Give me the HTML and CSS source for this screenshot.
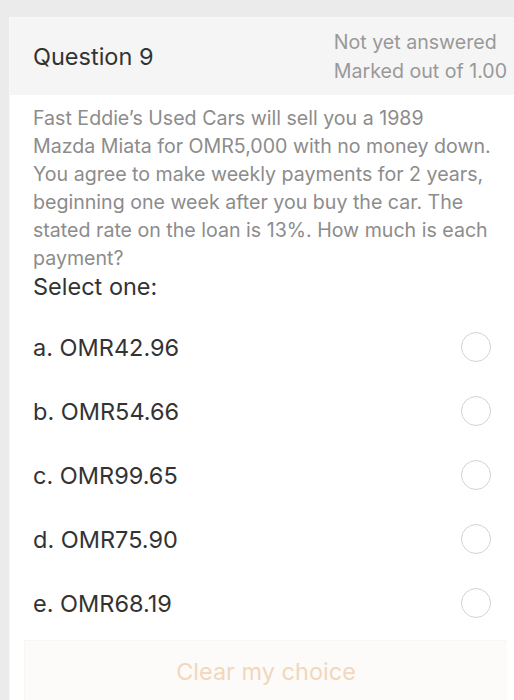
FILE: index.html
```html
<!DOCTYPE html>
<html>
<head>
<meta charset="utf-8">
<link rel="stylesheet" href="styles.css">
</head>
<body>
<div class="card">
  <div class="header">
    <div class="title">Question 9</div>
    <div class="meta">
      <div>Not yet answered</div>
      <div>Marked out of 1.00</div>
    </div>
  </div>
  <div class="content">
    <div class="qtext">Fast Eddie’s Used Cars will sell you a 1989<br>Mazda Miata for OMR5,000 with no money down. You agree to make weekly payments for 2 years, beginning one week after you buy the car. The stated rate on the loan is 13%. How much is each payment?</div>
    <div class="prompt">Select one:</div>
    <div class="options">
      <div class="option"><span class="label">a. OMR42.96</span><span class="radio"></span></div>
      <div class="option"><span class="label">b. OMR54.66</span><span class="radio"></span></div>
      <div class="option"><span class="label">c. OMR99.65</span><span class="radio"></span></div>
      <div class="option"><span class="label">d. OMR75.90</span><span class="radio"></span></div>
      <div class="option"><span class="label">e. OMR68.19</span><span class="radio"></span></div>
    </div>
    <div class="clear">Clear my choice</div>
  </div>
</div>
</body>
</html>
```
FILE: styles.css
```css
html, body {
  margin: 0;
  padding: 0;
}
body {
  background: #ebebeb;
  padding: 17px 0 0 9px;
  font-family: Inter, Roboto, sans-serif;
  height: 700px;
  overflow: hidden;
  box-sizing: border-box;
}
.card {
  background: #ffffff;
  border-left: 1px solid #f8f8f8;
  border-top: 1px solid #f8f8f8;
  height: 700px;
}
.header {
  background: #f5f5f5;
  height: 77px;
  display: flex;
  align-items: center;
  padding-left: 23px;
}
.title {
  font-size: 23.5px;
  color: #333333;
}
.meta {
  margin-left: auto;
  padding-right: 7px;
  font-size: 19.6px;
  line-height: 29px;
  color: #999999;
}
.content {
  padding: 9px 0 0 23px;
}
.qtext {
  font-size: 19.6px;
  line-height: 28px;
  color: #8c8c8c;
  max-width: 468px;
}
.prompt {
  font-size: 23.5px;
  line-height: 30px;
  color: #333333;
}
.options {
  padding-top: 13px;
}
.option {
  height: 64px;
  display: flex;
  align-items: center;
  justify-content: space-between;
  padding-right: 23px;
}
.label {
  font-size: 23.5px;
  color: #333333;
}
.radio {
  width: 28px;
  height: 28px;
  border: 1.5px solid #d2d2d2;
  border-radius: 50%;
}
.clear {
  margin: 5px 0 0 -9px;
  width: 482px;
  height: 70px;
  background: #fcfbfa;
  color: #f2d7ba;
  font-size: 23.5px;
  text-align: center;
  line-height: 62px;
  border-top: 1px solid #f7f6f5;
  border-left: 1px solid #f7f6f5;
}
```
